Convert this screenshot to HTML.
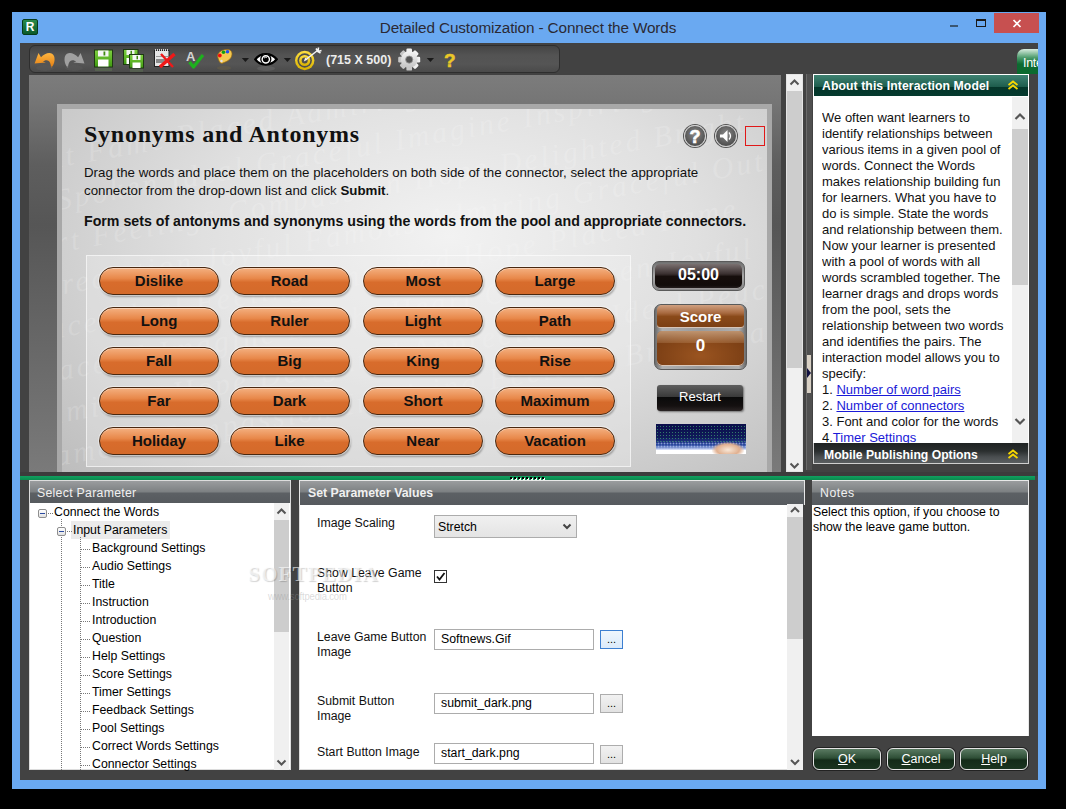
<!DOCTYPE html>
<html><head><meta charset="utf-8">
<style>
*{margin:0;padding:0;box-sizing:border-box}
html,body{width:1066px;height:809px;overflow:hidden;background:#000;font-family:"Liberation Sans",sans-serif}
.a{position:absolute}
#frame{left:12px;top:12px;width:1034px;height:777px;background:#6aa9f1}
#title{left:0;top:12px;width:1056px;text-align:center;font-size:15.3px;letter-spacing:-.12px;color:#2a2a35;line-height:32px}
#client{left:20px;top:43px;width:1018px;height:737px;background:#424242}
#toolbar{left:29px;top:45px;width:531px;height:28px;border-radius:6px;background:linear-gradient(#444,#535353 35%,#555 70%,#4a4a4a);border:1px solid #2e2e2e}
#preview{left:29px;top:75px;width:752px;height:397px;background:linear-gradient(#7c7c7c 0,#767676 25px,#5e5e5e 90px,#565656 150px,#666 260px,#7a7a7a 397px)}
#gframe{left:57px;top:104px;width:715px;height:368px;background:#a8a8a8}
#game{left:62px;top:109px;width:705px;height:363px;background:radial-gradient(ellipse at 55% 35%,#f2f2f2 0,#e0e0e0 45%,#bdbdbd 100%)}
.sb{background:#f0f0f0;border:1px solid #dcdcdc}
.panelhd{background:linear-gradient(#7e8284,#5a5e60 50%,#45494b);color:#e8e8e8;font-size:12px}
.white{background:#fff}
.ph{background:linear-gradient(#9a9c9e 0,#7c8082 11px,#5c6064 12px,#565a5e 100%)}
.tl{font-size:12.3px;color:#000;white-space:nowrap;line-height:14px}
.lb{font-size:12.3px;color:#111;white-space:nowrap;line-height:14px}
.tb{width:9px;height:9px;border:1px solid #8e8e8e;border-radius:2px;background:linear-gradient(#fff,#e0e0e0)}
.tb::after{content:"";position:absolute;left:1px;top:3px;width:5px;height:1px;background:#2a4aa0}
.hd{height:1px;background:repeating-linear-gradient(90deg,#777 0 1px,transparent 1px 2px)}
.vd{width:1px;background:repeating-linear-gradient(#777 0 1px,transparent 1px 2px)}
.inp{border:1px solid #acacac;background:#fff;font-size:12.3px;line-height:19px;padding-left:6px;color:#000;white-space:nowrap}
.dots{width:23px;height:19px;border:1px solid #adadad;background:linear-gradient(#f2f2f2,#e2e2e2);font-size:11px;line-height:17px;text-align:center;color:#000}
.gb{height:22px;border:1px solid #e4e4e4;border-radius:6px;background:linear-gradient(#5a7a62 0,#2e4e36 45%,#132a18 55%,#1a3420 100%);box-shadow:0 0 0 1px #222;color:#fff;font-size:12.5px;line-height:21px;text-align:center}
.wb{width:120px;height:28px;border-radius:14px;border:1px solid #4a2810;background:linear-gradient(#f4b080 0,#e8884a 40%,#d86c2c 55%,#d46a2a 100%);box-shadow:0 0 0 1px rgba(255,255,255,.45),1px 2px 2px rgba(0,0,0,.3),inset 0 1px 0 rgba(255,255,255,.4);font-weight:bold;font-size:15px;line-height:26px;text-align:center;color:#111}
.rc{width:22px;height:22px;border-radius:50%;background:radial-gradient(circle at 50% 40%,#8a8a8a,#5a5a5a 60%,#3a3a3a);border:1.5px solid #d0d0d0;box-shadow:0 0 0 1px #555}
.rc svg{position:absolute;left:-2.5px;top:-2.5px}
</style></head><body>
<div class="a" id="frame"></div>
<div class="a" id="title">Detailed Customization - Connect the Words</div>
<!-- app icon -->
<div class="a" style="left:22px;top:19px;width:16px;height:16px;background:linear-gradient(#2a8a4a,#0b5a2a);border:1px solid #063b1b;border-radius:2px;color:#fff;font-weight:bold;font-size:12px;line-height:14px;text-align:center">R</div>
<!-- window controls -->
<div class="a" style="left:950px;top:25px;width:8px;height:2px;background:#3a5672"></div>
<div class="a" style="left:976px;top:19px;width:10px;height:8px;border:1px solid #1a1a1a;border-top-width:2px"></div>
<div class="a" style="left:994px;top:13px;width:45px;height:20px;background:#c75050"></div>
<svg class="a" style="left:1012px;top:19px" width="10" height="9" viewBox="0 0 10 9"><path d="M1.5 1 L8.5 8 M8.5 1 L1.5 8" stroke="#fff" stroke-width="1.7"/></svg>
<div class="a" id="client"></div>
<div class="a" id="toolbar"></div>

<!-- toolbar icons -->
<svg class="a" style="left:29px;top:45px" width="440" height="29" viewBox="29 45 440 29">
 <defs>
  <linearGradient id="gor" x1="0" y1="0" x2="0" y2="1"><stop offset="0" stop-color="#ffb640"/><stop offset="1" stop-color="#e07a10"/></linearGradient>
  <linearGradient id="ggr" x1="0" y1="0" x2="0" y2="1"><stop offset="0" stop-color="#7fd040"/><stop offset="1" stop-color="#3f9a10"/></linearGradient>
  <linearGradient id="gye" x1="0" y1="0" x2="0" y2="1"><stop offset="0" stop-color="#ffe040"/><stop offset="1" stop-color="#d8b000"/></linearGradient>
 </defs>
 <!-- undo -->
 <path d="M34.6 63.5 L38.5 53 L41 57.3 C45 52.5 52 51 54 56 C55.5 60 54 65 51 68.3 C51 64 50 60.5 46.5 60.2 C45 60.2 44 60.8 43 61.5 L45.8 62.5 Z" fill="url(#gor)"/>
 <ellipse cx="45" cy="68" rx="9" ry="3" fill="#5a5a5a" opacity=".5"/>
 <!-- redo -->
 <path d="M84.5 63.5 L80.6 53 L78.1 57.3 C74.1 52.5 67.1 51 65.1 56 C63.6 60 65.1 65 68.1 68.3 C68.1 64 69.1 60.5 72.6 60.2 C74.1 60.2 75.1 60.8 76.1 61.5 L73.3 62.5 Z" fill="#a0a0a0"/>
 <ellipse cx="74" cy="68" rx="9" ry="3" fill="#5a5a5a" opacity=".5"/>
 <!-- save -->
 <rect x="94.5" y="50" width="18" height="17" fill="url(#ggr)" stroke="#1e3a12" stroke-width="1"/>
 <rect x="98" y="50.5" width="10.5" height="6" fill="#f6f6f6"/><rect x="103.5" y="51.5" width="1.8" height="4" fill="#3f8a10"/>
 <rect x="98" y="59.5" width="10.5" height="7" fill="#fff"/>
 <rect x="95" y="68" width="17" height="3" fill="#6a8a5a" opacity=".35"/>
 <!-- save all -->
 <rect x="123.5" y="49.5" width="14.5" height="15" fill="url(#ggr)" stroke="#1e3a12"/>
 <rect x="126.5" y="50" width="8" height="5" fill="#f0f0f0"/><rect x="130.5" y="50.8" width="1.5" height="3.5" fill="#3f8a10"/>
 <rect x="126.5" y="58" width="8" height="6" fill="#fff"/>
 <rect x="129.5" y="54.5" width="14" height="13.5" fill="url(#ggr)" stroke="#1e3a12"/>
 <rect x="132.5" y="55" width="8" height="5" fill="#f6f6f6"/><rect x="136.5" y="55.8" width="1.5" height="3.5" fill="#3f8a10"/>
 <rect x="132.5" y="62.5" width="8" height="5.5" fill="#fff"/>
 <rect x="130" y="69" width="13" height="3" fill="#6a8a5a" opacity=".3"/>
 <!-- delete -->
 <rect x="154.5" y="50.5" width="14.5" height="16" fill="#e6e6e6" stroke="#222" stroke-width="1"/>
 <path d="M155 50 h14" stroke="#fff" stroke-width="1.5" stroke-dasharray="1 1"/>
 <rect x="156" y="56" width="12" height="1" fill="#999"/><rect x="156" y="59" width="12" height="4" fill="#8a8a8a"/>
 <path d="M161 54 L173 67" stroke="#f01818" stroke-width="2.4"/><path d="M174.5 54 L160 67" stroke="#f01818" stroke-width="3.4"/>
 <!-- spell -->
 <text x="186" y="60.5" font-family="Liberation Sans" font-weight="bold" font-size="13" fill="#d4d4d4">A</text>
 <path d="M189.5 62 L193.5 67 L203 55" stroke="#1eb01e" stroke-width="3.2" fill="none" stroke-linejoin="round"/>
 <!-- palette -->
 <path d="M218 58 C216 53 222 49 228 49.5 C232 50 233 54 231 57.5 C229 61 225 62 223 63 C220 64.5 219 61 218 58 Z" fill="#f4c850" stroke="#9a6a10" stroke-width=".7"/>
 <circle cx="221.5" cy="61" r="1.2" fill="#dde"/>
 <circle cx="219.8" cy="55.5" r="1.9" fill="#f01010"/><circle cx="223.5" cy="52.3" r="1.8" fill="#10a010"/><circle cx="227.5" cy="51.8" r="1.8" fill="#2050f0"/>
 <ellipse cx="224" cy="68" rx="7" ry="2" fill="#7a6a40" opacity=".3"/>
 <path d="M241.8 58 h7.2 l-3.6 4 z" fill="#1a1a1a"/>
 <!-- eye -->
 <path d="M255.3 59.3 C260 52.3 271.5 52.3 276.7 59.3 C271.5 66.2 260 66.2 255.3 59.3 Z" fill="#fff" stroke="#000" stroke-width="2.3"/>
 <circle cx="265.8" cy="59.3" r="5" fill="#fff" stroke="#000" stroke-width="1.3"/>
 <circle cx="265.8" cy="59.3" r="2.9" fill="#000"/>
 <path d="M264 58.2 A2 2 0 0 1 266.8 57.6" stroke="#fff" stroke-width=".9" fill="none"/>
 <ellipse cx="266" cy="68.5" rx="9" ry="2.5" fill="#777" opacity=".35"/>
 <path d="M283.8 58 h7.2 l-3.6 4 z" fill="#1a1a1a"/>
 <!-- target -->
 <circle cx="304.7" cy="60.5" r="9.7" fill="url(#gye)"/>
 <circle cx="304.7" cy="60.5" r="7.2" fill="#4e4e4e"/>
 <circle cx="304.7" cy="60.5" r="5.6" fill="url(#gye)"/>
 <circle cx="304.7" cy="60.5" r="3" fill="#4e4e4e"/>
 <path d="M306 59.5 L317.5 50.5" stroke="#f4f4f4" stroke-width="1.5"/>
 <path d="M303.8 61.6 L305.2 57.4 L307.4 59.8 Z" fill="#f4f4f4"/>
 <path d="M316 48.5 L318 51.5 L321.5 50.5 M318.5 47.5 L318 51.5 M320.5 53 L318 51.5" stroke="#f4f4f4" stroke-width="1.6" fill="none"/>
 <!-- text -->
 <text x="326" y="64" font-family="Liberation Sans" font-weight="bold" font-size="12.5" fill="#ececec">(715 X 500)</text>
 <!-- gear -->
 <defs><linearGradient id="ggy" x1="0" y1="0" x2="0" y2="1"><stop offset="0" stop-color="#f4f4f4"/><stop offset="1" stop-color="#c4c4c4"/></linearGradient></defs>
 <g transform="translate(409.2,59.6)">
  <g fill="url(#ggy)">
   <rect x="-2.8" y="-11" width="5.6" height="22" rx="1.2"/>
   <rect x="-2.8" y="-11" width="5.6" height="22" rx="1.2" transform="rotate(45)"/>
   <rect x="-2.8" y="-11" width="5.6" height="22" rx="1.2" transform="rotate(90)"/>
   <rect x="-2.8" y="-11" width="5.6" height="22" rx="1.2" transform="rotate(135)"/>
   <circle r="8.3"/>
  </g>
  <circle r="3.6" fill="#555"/>
  <circle r="3.6" fill="none" stroke="#9a9a9a" stroke-width=".8"/>
 </g>
 <path d="M426.8 58 h7.2 l-3.6 4 z" fill="#1a1a1a"/>
 <!-- help -->
 <text x="444" y="67" font-family="Liberation Sans" font-weight="bold" font-size="19" fill="#ecc828" stroke="#ecc828" stroke-width=".5">?</text>
</svg>
<!-- Int tab -->
<div class="a" style="left:1017px;top:49px;width:21px;height:25px;border-radius:7px 0 0 0;background:linear-gradient(#d8ecdf,#4a9a6a 35%,#0d6a30 60%,#0b6a2e);color:#fff;font-size:12.5px;line-height:29px;padding-left:6px;overflow:hidden;white-space:nowrap;letter-spacing:-.3px">Inte</div>

<div class="a" id="preview"></div>
<div class="a" id="gframe"></div>
<div class="a" id="game" style="overflow:hidden"><div class="a" style="left:-60px;top:-40px;width:900px;transform:rotate(-10deg);font-family:'Liberation Serif';font-style:italic;font-size:30px;line-height:42px;color:rgba(255,255,255,.17);white-space:nowrap;letter-spacing:3px">Bright Fame Placed Admiring Appreciation Joyful<br>Out-Spoken Ideal Graceful Imagine Inspiring Peace<br>Heart Feelings Compassion Hope Delighted Bright<br>Appreciation Joyful Famous Admiring Graceful Out<br>Peace Ideal Feelings Inspired Hope Placed Fame<br>Graceful Imagine Bright Heart Out-Spoken Joyful<br>Admiring Hope Delighted Appreciation Ideal Peace<br>Famous Compassion Inspiring Feelings Bright Fame</div></div>
<div class="a" style="left:84px;top:121px;font-family:'Liberation Serif';font-weight:bold;font-size:24px;letter-spacing:.75px;color:#111;white-space:nowrap">Synonyms and Antonyms</div>
<div class="a" style="left:84px;top:164px;font-size:13.3px;line-height:18px;color:#111;white-space:nowrap">Drag the words and place them on the placeholders on both side of the connector, select the appropriate<br>connector from the drop-down list and click <b>Submit</b>.</div>
<div class="a" style="left:84px;top:213px;font-size:14.2px;font-weight:bold;color:#111;white-space:nowrap">Form sets of antonyms and synonyms using the words from the pool and appropriate connectors.</div>
<div class="a rc" style="left:684px;top:125px"><svg width="24" height="24" viewBox="0 0 24 24"><text x="12" y="18.5" text-anchor="middle" font-family="Liberation Sans" font-weight="bold" font-size="18" fill="#fff" stroke="#fff" stroke-width=".6">?</text></svg></div>
<div class="a rc" style="left:715px;top:125px"><svg width="24" height="24" viewBox="0 0 24 24"><path d="M6 10.5h3l4.5-4.5v12l-4.5-4.5H6z" fill="#fff"/><path d="M15 8.5q3 3.5 0 7" stroke="#fff" stroke-width="1.3" fill="none"/></svg></div>
<div class="a" style="left:745px;top:126px;width:20px;height:20px;border:1px solid #e01818"></div>
<div class="a" style="left:86px;top:255px;width:545px;height:212px;border:1px solid rgba(255,255,255,.6);background:rgba(240,240,240,.35)"></div>
<div class="a wb" style="left:99.0px;top:267px">Dislike</div>
<div class="a wb" style="left:229.5px;top:267px">Road</div>
<div class="a wb" style="left:363px;top:267px">Most</div>
<div class="a wb" style="left:495px;top:267px">Large</div>
<div class="a wb" style="left:99.0px;top:307px">Long</div>
<div class="a wb" style="left:229.5px;top:307px">Ruler</div>
<div class="a wb" style="left:363px;top:307px">Light</div>
<div class="a wb" style="left:495px;top:307px">Path</div>
<div class="a wb" style="left:99.0px;top:347px">Fall</div>
<div class="a wb" style="left:229.5px;top:347px">Big</div>
<div class="a wb" style="left:363px;top:347px">King</div>
<div class="a wb" style="left:495px;top:347px">Rise</div>
<div class="a wb" style="left:99.0px;top:387px">Far</div>
<div class="a wb" style="left:229.5px;top:387px">Dark</div>
<div class="a wb" style="left:363px;top:387px">Short</div>
<div class="a wb" style="left:495px;top:387px">Maximum</div>
<div class="a wb" style="left:99.0px;top:427px">Holiday</div>
<div class="a wb" style="left:229.5px;top:427px">Like</div>
<div class="a wb" style="left:363px;top:427px">Near</div>
<div class="a wb" style="left:495px;top:427px">Vacation</div>

<div class="a" style="left:652px;top:261px;width:93px;height:30px;border-radius:7px;border:1px solid #5a5a5a;background:linear-gradient(#707070,#a8a8a8 50%,#8a8a8a)"></div>
<div class="a" style="left:655px;top:264px;width:87px;height:25px;border-radius:5px;background:linear-gradient(#7a7070 0,#3a3030 40%,#160e0c 50%,#120c0a 85%,#2a2424 100%);box-shadow:inset 0 -1px 0 rgba(255,255,255,.55);color:#fff;font-weight:bold;font-size:16px;line-height:21px;text-align:center">05:00</div>
<div class="a" style="left:654px;top:304px;width:93px;height:66px;border-radius:7px;border:1px solid #5a5a5a;background:linear-gradient(90deg,#6a6a6a,#b0b0b0 8%,#9a9a9a 50%,#b0b0b0 92%,#6a6a6a)"></div>
<div class="a" style="left:657px;top:305px;width:87px;height:23px;border-radius:5px 5px 3px 3px;background:linear-gradient(#d0a080 0,#a86a40 35%,#8a4a1a 50%,#7a3e12 100%);box-shadow:inset 0 -1px 0 rgba(255,255,255,.7);color:#fff;font-weight:bold;font-size:15px;line-height:24px;text-align:center">Score</div>
<div class="a" style="left:657px;top:331px;width:87px;height:35px;border-radius:5px;background:radial-gradient(ellipse at 50% 70%,#9a5420,#7a3e14 80%),#7a3e14;box-shadow:inset 0 -1px 0 rgba(255,255,255,.7);overflow:hidden;color:#fff;font-weight:bold;font-size:17px;line-height:30px;text-align:center"><div class="a" style="left:0;top:0;width:87px;height:12px;background:linear-gradient(rgba(255,230,200,.5),rgba(255,220,180,.15))"></div><span style="position:relative">0</span></div>
<div class="a" style="left:657px;top:385px;width:86px;height:26px;border-radius:3px;background:linear-gradient(#5e5e5e,#3a3a3a 45%,#0a0a0a 48%,#141010 80%,#2a2424);box-shadow:1px 1px 2px rgba(0,0,0,.45);color:#fff;font-size:13px;line-height:24px;text-align:center">Restart</div>
<div class="a" style="left:656px;top:424px;width:90px;height:30px;overflow:hidden;background:linear-gradient(#0a0e4a 0,#101a5a 45%,#2a4aa0 70%,#8aa0d8 80%,#fff 88%,#fff 100%)"><div class="a" style="left:0;top:1px;width:90px;height:19px;background:radial-gradient(circle,rgba(60,150,110,.8) 0 .8px,transparent 1px) 0 0/3px 3px"></div><div class="a" style="left:0;top:17px;width:90px;height:9px;background:radial-gradient(circle,rgba(200,215,255,.6) 0 .8px,transparent 1.1px) 1px 1px/3px 3px"></div><div class="a" style="left:56px;top:18px;width:32px;height:13px;border-radius:50% 50% 0 0;background:radial-gradient(ellipse at 50% 60%,#f8e8d8,#e0b090 50%,rgba(200,140,110,0) 75%)"></div></div>
<div class="a" style="left:20px;top:472px;width:1018px;height:4px;background:#3c3c3c"></div>
<div class="a" style="left:20px;top:476px;width:1015px;height:4px;background:linear-gradient(#10a060,#0a8a4e)"></div>
<div class="a" style="left:511px;top:478px;width:36px;height:2px;background:repeating-linear-gradient(90deg,#fff 0 2px,transparent 2px 4px)"></div><div class="a" style="left:510px;top:477px;width:36px;height:2px;background:repeating-linear-gradient(90deg,#000 0 2px,transparent 2px 4px)"></div>


<!-- preview scrollbar -->
<div class="a" style="left:786px;top:74px;width:17px;height:398px;background:#f0f0f0;border:1px solid #e4e4e4"></div>
<div class="a" style="left:787px;top:91px;width:15px;height:277px;background:#cdcdcd"></div>
<svg class="a" style="left:786px;top:74px" width="17" height="17"><path d="M4.5 10.5 L8.5 6.5 L12.5 10.5" stroke="#555" stroke-width="2" fill="none"/></svg>
<svg class="a" style="left:786px;top:458px" width="17" height="14"><path d="M4.5 5.5 L8.5 9.5 L12.5 5.5" stroke="#555" stroke-width="2" fill="none"/></svg>
<!-- separator -->
<div class="a" style="left:806px;top:74px;width:6px;height:396px;background:#505050;border-left:1px solid #6a6a6a"></div>
<div class="a" style="left:807px;top:355px;width:4px;height:38px;background:#d8d0c4"></div>
<svg class="a" style="left:806px;top:367px" width="6" height="12"><path d="M1 1 L5 6 L1 11 Z" fill="#101040"/></svg>
<!-- about panel -->
<div class="a" style="left:813px;top:74px;width:216px;height:390px;background:#fff"></div>
<div class="a" style="left:814px;top:75px;width:214px;height:21px;background:linear-gradient(#3f8272 0,#1d5c4c 12px,#04362a 12px,#053a2e 100%)"></div>
<div class="a" style="left:822px;top:79px;color:#fff;font-weight:bold;font-size:12.2px;letter-spacing:.1px;white-space:nowrap">About this Interaction Model</div>
<svg class="a" style="left:1007px;top:80px" width="12" height="10"><path d="M1.5 5 L6 1.5 L10.5 5 M1.5 9 L6 5.5 L10.5 9" stroke="#f8d800" stroke-width="1.8" fill="none"/></svg>
<div class="a" style="left:822px;top:110px;width:190px;height:333px;overflow:hidden;font-size:13px;line-height:16px;color:#111;white-space:nowrap">We often want learners to<br>identify relationships between<br>various items in a given pool of<br>words. Connect the Words<br>makes relationship building fun<br>for learners. What you have to<br>do is simple. State the words<br>and relationship between them.<br>Now your learner is presented<br>with a pool of words with all<br>words scrambled together. The<br>learner drags and drops words<br>from the pool, sets the<br>relationship between two words<br>and identifies the pairs. The<br>interaction model allows you to<br>specify:<br>1. <u style="color:#1a1ad8">Number of word pairs</u><br>2. <u style="color:#1a1ad8">Number of connectors</u><br>3. Font and color for the words<br>4.<u style="color:#1a1ad8">Timer Settings</u></div>
<div class="a" style="left:1012px;top:97px;width:16px;height:346px;background:#f0f0f0"></div>
<div class="a" style="left:1012px;top:129px;width:16px;height:156px;background:#cdcdcd"></div>
<svg class="a" style="left:1012px;top:108px" width="16" height="16"><path d="M3.5 11 L8 6.5 L12.5 11" stroke="#555" stroke-width="2.2" fill="none"/></svg>
<svg class="a" style="left:1012px;top:414px" width="16" height="16"><path d="M3.5 5 L8 9.5 L12.5 5" stroke="#555" stroke-width="2.2" fill="none"/></svg>
<div class="a" style="left:813px;top:443px;width:216px;height:21px;background:linear-gradient(#1e2222 0,#2a2e2e 40%,#4a4e50 70%,#5a5e60 100%);border:1px solid #cfcfcf;border-top:none"></div>
<div class="a" style="left:824px;top:448px;color:#fff;font-weight:bold;font-size:12.2px;white-space:nowrap">Mobile Publishing Options</div>
<svg class="a" style="left:1007px;top:449px" width="12" height="10"><path d="M1.5 5 L6 1.5 L10.5 5 M1.5 9 L6 5.5 L10.5 9" stroke="#f8d800" stroke-width="1.8" fill="none"/></svg>
<!-- select parameter panel -->
<div class="a" style="left:29px;top:480px;width:262px;height:290px;background:#fff;border:1px solid #dcdcdc"></div>
<div class="a ph" style="left:30px;top:481px;width:260px;height:22px"></div>
<div class="a" style="left:37px;top:486px;color:#f0f0f0;font-size:12.3px;letter-spacing:.28px;white-space:nowrap">Select Parameter</div>
<div class="a" style="left:274px;top:503px;width:15px;height:267px;background:#f0f0f0"></div>
<div class="a" style="left:274px;top:520px;width:15px;height:112px;background:#cdcdcd"></div>
<svg class="a" style="left:274px;top:504px" width="15" height="15"><path d="M3.5 9.5 L7.5 5.5 L11.5 9.5" stroke="#555" stroke-width="2" fill="none"/></svg>
<svg class="a" style="left:274px;top:755px" width="15" height="15"><path d="M3.5 5.5 L7.5 9.5 L11.5 5.5" stroke="#555" stroke-width="2" fill="none"/></svg>
<div class="a tb" style="left:38px;top:509px"></div>
<div class="a hd" style="left:48px;top:513px;width:5px"></div>
<div class="a tl" style="left:54px;top:505px">Connect the Words</div>
<div class="a vd" style="left:61px;top:519px;height:251px"></div>
<div class="a" style="left:71px;top:521px;width:99px;height:18px;background:#ebebeb"></div>
<div class="a tb" style="left:57px;top:527px"></div>
<div class="a hd" style="left:67px;top:531px;width:5px"></div>
<div class="a tl" style="left:73px;top:523px">Input Parameters</div>
<div class="a vd" style="left:80px;top:537px;height:233px"></div>
<div class="a tl" style="left:92px;top:541px">Background Settings</div><div class="a hd" style="left:81px;top:549px;width:9px"></div>
<div class="a tl" style="left:92px;top:559px">Audio Settings</div><div class="a hd" style="left:81px;top:567px;width:9px"></div>
<div class="a tl" style="left:92px;top:577px">Title</div><div class="a hd" style="left:81px;top:585px;width:9px"></div>
<div class="a tl" style="left:92px;top:595px">Instruction</div><div class="a hd" style="left:81px;top:603px;width:9px"></div>
<div class="a tl" style="left:92px;top:613px">Introduction</div><div class="a hd" style="left:81px;top:621px;width:9px"></div>
<div class="a tl" style="left:92px;top:631px">Question</div><div class="a hd" style="left:81px;top:639px;width:9px"></div>
<div class="a tl" style="left:92px;top:649px">Help Settings</div><div class="a hd" style="left:81px;top:657px;width:9px"></div>
<div class="a tl" style="left:92px;top:667px">Score Settings</div><div class="a hd" style="left:81px;top:675px;width:9px"></div>
<div class="a tl" style="left:92px;top:685px">Timer Settings</div><div class="a hd" style="left:81px;top:693px;width:9px"></div>
<div class="a tl" style="left:92px;top:703px">Feedback Settings</div><div class="a hd" style="left:81px;top:711px;width:9px"></div>
<div class="a tl" style="left:92px;top:721px">Pool Settings</div><div class="a hd" style="left:81px;top:729px;width:9px"></div>
<div class="a tl" style="left:92px;top:739px">Correct Words Settings</div><div class="a hd" style="left:81px;top:747px;width:9px"></div>
<div class="a tl" style="left:92px;top:757px">Connector Settings</div><div class="a hd" style="left:81px;top:765px;width:9px"></div>

<!-- set parameter values -->
<div class="a" style="left:299px;top:480px;width:504px;height:290px;background:#fff;border:1px solid #dcdcdc;border-right:none"></div>
<div class="a" style="left:299px;top:480px;width:506px;height:25px;border:1px solid #e8e8e8;border-bottom:none"></div>
<div class="a ph" style="left:300px;top:481px;width:504px;height:24px"></div>
<div class="a" style="left:308px;top:486px;color:#f0f0f0;font-weight:bold;font-size:12.3px;white-space:nowrap">Set Parameter Values</div>
<div class="a lb" style="left:317px;top:516px">Image Scaling</div>
<div class="a" style="left:434px;top:515px;width:143px;height:23px;border:1px solid #acacac;background:linear-gradient(#f0f0f0,#e4e4e4)"></div>
<div class="a lb" style="left:438px;top:520px;color:#000">Stretch</div>
<svg class="a" style="left:561px;top:520px" width="12" height="12"><path d="M2.5 4.5 L6 8 L9.5 4.5" stroke="#444" stroke-width="2" fill="none"/></svg>
<div class="a lb" style="left:317px;top:566px;line-height:15px">Show Leave Game<br>Button</div>
<div class="a" style="left:434px;top:570px;width:13px;height:13px;border:1px solid #333;background:#fff"></div>
<svg class="a" style="left:434px;top:570px" width="13" height="13"><path d="M3 6.5 L5.5 9.5 L10.5 3" stroke="#111" stroke-width="1.8" fill="none"/></svg>
<div class="a lb" style="left:317px;top:630px;line-height:15px">Leave Game Button<br>Image</div>
<div class="a inp" style="left:434px;top:629px;width:160px;height:21px">Softnews.Gif</div>
<div class="a dots" style="left:600px;top:630px;border-color:#3c7fd1;background:linear-gradient(#eef6fd,#dbeafa)">...</div>
<div class="a lb" style="left:317px;top:694px;line-height:15px">Submit Button<br>Image</div>
<div class="a inp" style="left:434px;top:693px;width:160px;height:21px">submit_dark.png</div>
<div class="a dots" style="left:600px;top:694px">...</div>
<div class="a lb" style="left:317px;top:745px">Start Button Image</div>
<div class="a inp" style="left:434px;top:743px;width:160px;height:21px">start_dark.png</div>
<div class="a dots" style="left:600px;top:745px">...</div>
<div class="a" style="left:787px;top:504px;width:16px;height:266px;background:#f0f0f0"></div>
<div class="a" style="left:787px;top:517px;width:16px;height:122px;background:#cdcdcd"></div>
<svg class="a" style="left:787px;top:503px" width="16" height="14"><path d="M4 9 L8 5 L12 9" stroke="#555" stroke-width="2" fill="none"/></svg>
<svg class="a" style="left:787px;top:755px" width="16" height="14"><path d="M4 5 L8 9 L12 5" stroke="#555" stroke-width="2" fill="none"/></svg>
<!-- notes -->
<div class="a" style="left:812px;top:480px;width:217px;height:256px;background:#fff;border-top:1px solid #e8e8e8;border-right:1px solid #e8e8e8"></div>
<div class="a ph" style="left:812px;top:481px;width:216px;height:24px"></div>
<div class="a" style="left:820px;top:486px;color:#f0f0f0;font-size:12.3px;letter-spacing:.5px;white-space:nowrap">Notes</div>
<div class="a lb" style="left:813px;top:505px;line-height:15px;color:#000">Select this option, if you choose to<br>show the leave game button.</div>
<div class="a gb" style="left:813px;top:748px;width:68px"><u>O</u>K</div>
<div class="a gb" style="left:887px;top:748px;width:68px"><u>C</u>ancel</div>
<div class="a gb" style="left:960px;top:748px;width:68px"><u>H</u>elp</div>
<div class="a" style="left:248px;top:562px;font-family:'Liberation Serif';font-weight:bold;font-size:21px;letter-spacing:1.2px;color:rgba(255,255,255,.6);text-shadow:1px 1px 1px rgba(0,0,0,.18);white-space:nowrap">SOFTPEDIA</div>
<div class="a" style="left:268px;top:591px;font-family:'Liberation Sans';font-size:10px;color:rgba(150,150,150,.35);white-space:nowrap;transform:scaleX(.95);transform-origin:0 0;letter-spacing:-.2px">www.softpedia.com</div>
</body></html>
